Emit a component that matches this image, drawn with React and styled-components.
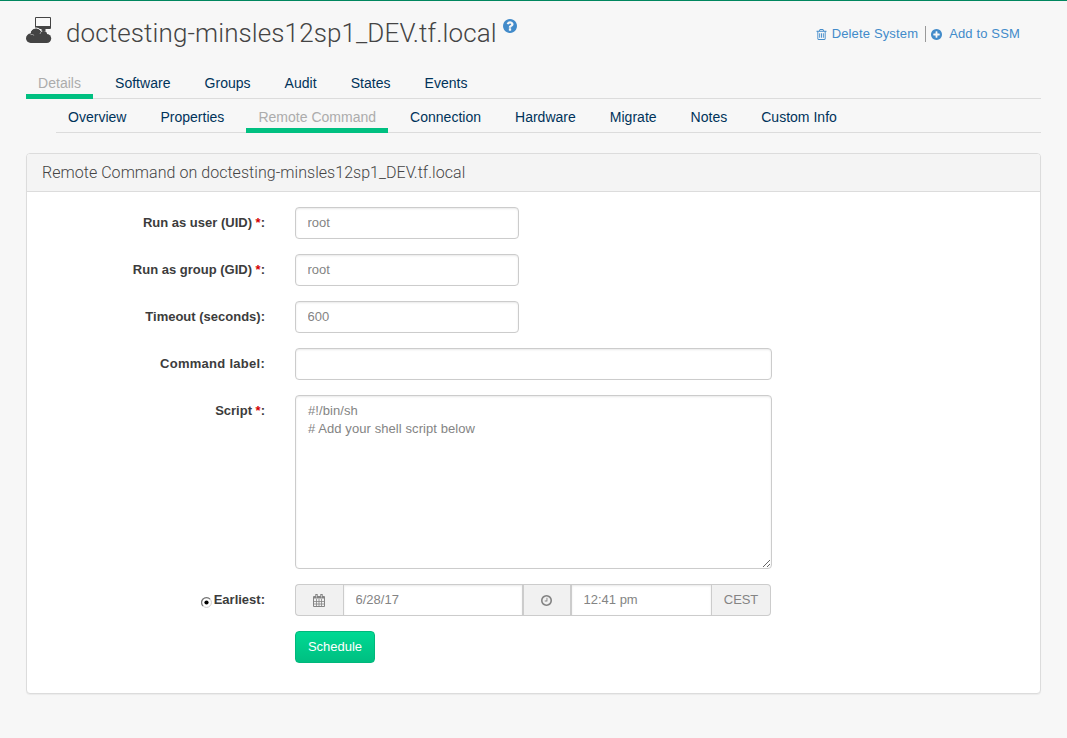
import React from "react";
import styled, { createGlobalStyle } from "styled-components";

const Global = createGlobalStyle`
  * { box-sizing: border-box; }
  body { margin: 0; background: #f7f7f7; color: #3c3c3c; font: 13px/18px "Liberation Sans", Arial, sans-serif; }
  input, textarea, button { font: inherit; letter-spacing: inherit; }
`;
const Page = styled.div`
  height: 738px; border-top: 1px solid #00875f; padding: 0 26px;
  display: flex; flex-direction: column; overflow: hidden;
`;
const Header = styled.header`
  display: flex; justify-content: space-between; height: 68px; padding-right: 21px;
`;
const Title = styled.h1`
  margin: 0; display: flex; padding-top: 15px; font: 300 26px/34px Roboto, sans-serif; color: #444;
  > svg:last-child { margin: 3px 0 0 6px; }
`;
const TitleText = styled.span`
  margin-left: 14px; letter-spacing: 0.11px;
`;
const Actions = styled.div`
  display: flex; padding-top: 25px; height: 41px; line-height: 16px; color: #428bca; letter-spacing: 0.15px;
`;
const Action = styled.a`
  display: flex; align-items: center; white-space: pre;
  svg { margin-right: ${(p) => p.$gap}px; }
  & + & { border-left: 1px solid #999; margin-left: 7px; padding-left: 5px; }
`;
const Tabs = styled.nav`
  display: flex; flex: none; height: 30px; gap: 10px; border-bottom: 1px solid #dcdcdc;
  font-size: 14px; letter-spacing: ${(p) => p.$spacing}px;
  margin-left: ${(p) => p.$indent || 0}px;
  margin-top: ${(p) => p.$top || 0}px;
`;
const Tab = styled.a`
  height: 30px; padding: 5px 12px 0; line-height: 18px; white-space: nowrap;
  color: ${(p) => (p.$active ? "#acacac" : "#00335a")};
  border-bottom: 5px solid ${(p) => (p.$active ? "#00c081" : "transparent")};
`;
const Panel = styled.section`
  margin-top: 20px; height: 541px; border: 1px solid #dcdcdc; border-radius: 4px; background: #fff;
  box-shadow: 0 1px 1px rgba(0,0,0,.05);
`;
const PanelHead = styled.h2`
  margin: 0; height: 38px; padding: 0 15px; background: #f4f4f4; border-bottom: 1px solid #dcdcdc;
  border-radius: 3px 3px 0 0; font: 300 16px/37px Roboto, sans-serif; letter-spacing: 0.04px; color: #444;
`;
const Form = styled.div`
  padding: 15px 0 0; display: flex; flex-direction: column; gap: 15px;
`;
const Row = styled.div`
  display: grid; grid-template-columns: 238px 477px; column-gap: 30px; align-items: start;
`;
const Label = styled.label`
  display: flex; justify-content: flex-end; padding-top: 7px; white-space: pre; font-weight: 700; color: #3c3c3c;
  letter-spacing: ${(p) => p.$spacing || 0}px;
`;
const Required = styled.span`
  color: #d40000;
`;
const Input = styled.input`
  width: ${(p) => p.$width || 477}px; height: 32px; padding: 6px 11.5px 7px; border: 1px solid #ccc;
  border-radius: ${(p) => p.$radius || "4px"}; background: #fff; color: #848484; outline: 0;
  box-shadow: inset 0 1px 2px rgba(0,0,0,.09);
`;
const Script = styled.textarea`
  display: block; width: 477px; height: 174px; padding: 6px 12px; border: 1px solid #ccc; border-radius: 4px;
  background: #fff; color: #848484; resize: both; line-height: 18px; letter-spacing: 0.08px;
  box-shadow: inset 0 1px 2px rgba(0,0,0,.09);
`;
const Group = styled.div`
  display: flex; height: 32px;
`;
const Addon = styled.span`
  width: ${(p) => p.$width}px; height: 32px; display: flex; align-items: center; justify-content: center;
  background: #f1f1f1; border: 1px solid #ccc; border-width: ${(p) => p.$borders || "1px"};
  border-radius: ${(p) => p.$radius || "0"}; color: #848484; font-size: 13px; letter-spacing: -0.1px;
  svg { margin-right: 1px; }
`;
const Button = styled.button`
  width: 80px; height: 32px; padding: 0 0 1px; color: #fff; border: 1px solid #00b87b; border-radius: 4px;
  background: linear-gradient(#00d993, #00bf81);
`;

const ring = "q0 209-103 385.5t-279.5 279.5-385.5 103-385.5-103-279.5-279.5-103-385.5 103-385.5 279.5-279.5 385.5-103 385.5 103 279.5 279.5 103 385.5z";
const bar = "v576q0 14-9 23t-23 9h-64q-14 0-23-9t-9-23v-576q0-14 9-23t23-9h64q14 0 23 9t9 23z";
const paths = {
  help: "M1024 1376v-192q0-14-9-23t-23-9h-192q-14 0-23 9t-9 23v192q0 14 9 23t23 9h192q14 0 23-9t9-23zm256-672q0-88-55.5-163t-138.5-116-170-41q-243 0-371 213-15 24 8 42l132 100q7 6 19 6 16 0 25-12 53-68 86-92 34-24 86-24 48 0 85.5 26t37.5 59q0 38-20 61t-68 45q-63 28-115.5 86.5t-52.5 125.5v36q0 14 9 23t23 9h192q14 0 23-9t9-23q0-19 21.5-49.5t54.5-49.5q32-18 49-28.5t46-35 44.5-48 28-60.5 12.5-81zm384 192" + ring,
  plus: "M1344 960v-128q0-26-19-45t-45-19h-256v-256q0-26-19-45t-45-19h-128q-26 0-45 19t-19 45v256h-256q-26 0-45 19t-19 45v128q0 26 19 45t45 19h256v256q0 26 19 45t45 19h128q26 0 45-19t19-45v-256h256q26 0 45-19t19-45zm320-64" + ring,
  clock: "M1024 544v448q0 14-9 23t-23 9h-320q-14 0-23-9t-9-23v-64q0-14 9-23t23-9h224v-352q0-14 9-23t23-9h64q14 0 23 9t9 23zm416 352q0-148-73-273t-198-198-273-73-273 73-198 198-73 273 73 273 198 198 273 73 273-73 198-198 73-273zm224 0" + ring,
  trash: "M704 736" + bar + "m256 0" + bar + "m256 0" + bar + "m128 724v-948h-896v948q0 22 7 40.5t14.5 27 10.5 8.5h832q3 0 10.5-8.5t14.5-27 7-40.5zm-672-1076h448l-48-117q-7-9-17-11h-317q-10 2-17 11zm928 32v64q0 14-9 23t-23 9h-96v948q0 83-47 143.5t-113 60.5h-832q-66 0-113-58.5t-47-141.5v-952h-96q-14 0-23-9t-9-23v-64q0-14 9-23t23-9h309l70-167q15-37 54-63t79-26h320q40 0 79 26t54 63l70 167h309q14 0 23 9t9 23z",
};
const Icon = ({ name, size, color = "currentColor" }) => (
  <svg width={size} height={size} viewBox="128 128 1536 1536" fill={color}><path d={paths[name]} /></svg>
);
const SystemIcon = () => (
  <svg width="26" height="28" viewBox="0 0 26 28">
    <path d="M10 1h14q1 0 1 1v10q0 1-1 1h-14q-1 0-1-1v-10q0-1 1-1zM10 2v8h14v-8z" fill="#444" fillRule="evenodd" />
    <path d="M15.500 13h4v2h-4z" fill="#444" />
    <circle cx="10" cy="18" r="5.800" stroke="#f7f7f7" strokeWidth="1.2" />
    <g fill="#444">
      <circle cx="10" cy="17.800" r="5.300" />
      <circle cx="17.500" cy="18.500" r="3.600" />
      <circle cx="4.700" cy="22.300" r="4.700" />
      <circle cx="20.700" cy="22.500" r="4.500" />
      <path d="M4.700 18h16v9h-16z" />
    </g>
    <path d="M4.500 18.600q2-.6 3.600.7M14 18q.4-2 2.200-3.200" fill="none" stroke="#f7f7f7" strokeWidth=".5" />
  </svg>
);
const CalendarIcon = () => (
  <svg width="12" height="13" viewBox="0 0 12 13" fill="none" stroke="#848484">
    <path d="M.5 2.500h11v10H.5z" />
    <path d="M0 3h12v1.500H0z" fill="#848484" stroke="none" />
    <path d="M3.500 5v7M6 5v7M8.500 5v7M1 7.500h10M1 10h10" strokeWidth=".8" />
    <path d="M3.500 0v4M8.500 0v4" strokeWidth="2.400" />
    <path d="M3.500 1v2.500M8.500 1v2.500" stroke="#ddd" strokeWidth=".7" />
  </svg>
);
const RadioSvg = styled.svg`
  margin: 5px 2px 0 0;
`;
const Radio = () => (
  <RadioSvg width="11" height="12" viewBox="0 0 11 12">
    <circle cx="5.500" cy="6.500" r="4.900" fill="#fff" stroke="#ccc" />
    <path d="M2 10A4.900 4.900 0 0 1 9 3" fill="none" stroke="#777" strokeWidth="1.2" />
    <circle cx="5.500" cy="6.500" r="2.100" fill="#000" />
  </RadioSvg>
);
const Field = ({ label, required, spacing, children }) => (
  <Row>
    <Label $spacing={spacing}>{label}{required && <> <Required>*</Required></>}{label && ":"}</Label>
    {children}
  </Row>
);

export default function App() {
  return (
    <Page>
      <Global />
      <Header>
        <Title><SystemIcon /><TitleText>doctesting-minsles12sp1_DEV.tf.local</TitleText><Icon name="help" size={14} color="#428bca" /></Title>
        <Actions>
          <Action $gap={5}><Icon name="trash" size={11} />Delete System</Action>
          <Action $gap={7}><Icon name="plus" size={11} />Add to SSM</Action>
        </Actions>
      </Header>
      <Tabs $spacing={0.03}>
        {["Details", "Software", "Groups", "Audit", "States", "Events"].map((t, i) => <Tab key={t} $active={i === 0}>{t}</Tab>)}
      </Tabs>
      <Tabs $indent={30} $top={4} $spacing={0.012}>
        {["Overview", "Properties", "Remote Command", "Connection", "Hardware", "Migrate", "Notes", "Custom Info"].map((t, i) => <Tab key={t} $active={i === 2}>{t}</Tab>)}
      </Tabs>
      <Panel>
        <PanelHead>Remote Command on doctesting-minsles12sp1_DEV.tf.local</PanelHead>
        <Form>
          <Field label="Run as user (UID)" required><Input $width={224} defaultValue="root" /></Field>
          <Field label="Run as group (GID)" required><Input $width={224} defaultValue="root" /></Field>
          <Field label="Timeout (seconds)"><Input $width={224} defaultValue="600" /></Field>
          <Field label="Command label" spacing={0.27}><Input /></Field>
          <Field label="Script" required><Script defaultValue={"#!/bin/sh\n# Add your shell script below"} /></Field>
          <Row>
            <Label><Radio />Earliest:</Label>
            <Group>
              <Addon $width={48} $borders="1px 0 1px 1px" $radius="4px 0 0 4px"><CalendarIcon /></Addon>
              <Input $width={180} $radius="0" defaultValue="6/28/17" />
              <Addon $width={48}><Icon name="clock" size={11} /></Addon>
              <Input $width={141} $radius="0" defaultValue="12:41 pm" />
              <Addon $width={59} $borders="1px 1px 1px 0" $radius="0 4px 4px 0">CEST</Addon>
            </Group>
          </Row>
          <Field label=""><Button>Schedule</Button></Field>
        </Form>
      </Panel>
    </Page>
  );
}
